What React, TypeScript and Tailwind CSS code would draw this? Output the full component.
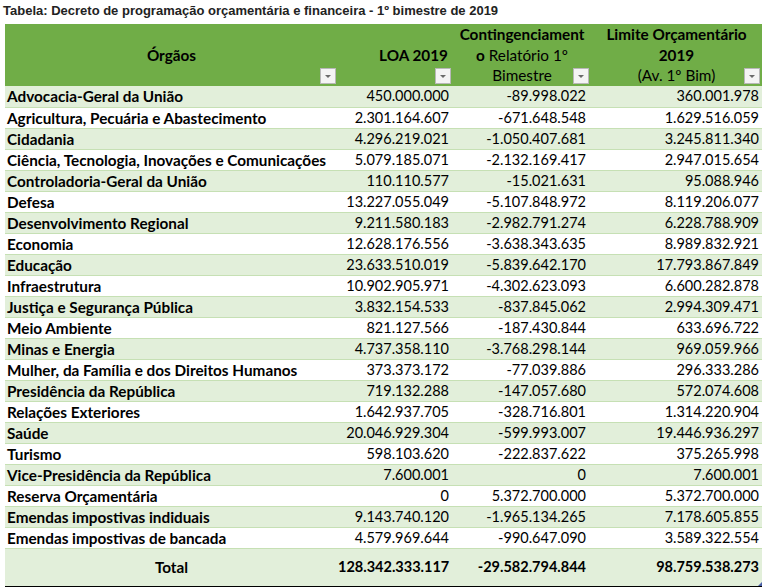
import React from "react";

type Row = { orgao: string; loa: string; cont: string; limite: string };

const rows: Row[] = [
  { orgao: "Advocacia-Geral da União", loa: "450.000.000", cont: "-89.998.022", limite: "360.001.978" },
  { orgao: "Agricultura, Pecuária e Abastecimento", loa: "2.301.164.607", cont: "-671.648.548", limite: "1.629.516.059" },
  { orgao: "Cidadania", loa: "4.296.219.021", cont: "-1.050.407.681", limite: "3.245.811.340" },
  { orgao: "Ciência, Tecnologia, Inovações e Comunicações", loa: "5.079.185.071", cont: "-2.132.169.417", limite: "2.947.015.654" },
  { orgao: "Controladoria-Geral da União", loa: "110.110.577", cont: "-15.021.631", limite: "95.088.946" },
  { orgao: "Defesa", loa: "13.227.055.049", cont: "-5.107.848.972", limite: "8.119.206.077" },
  { orgao: "Desenvolvimento Regional", loa: "9.211.580.183", cont: "-2.982.791.274", limite: "6.228.788.909" },
  { orgao: "Economia", loa: "12.628.176.556", cont: "-3.638.343.635", limite: "8.989.832.921" },
  { orgao: "Educação", loa: "23.633.510.019", cont: "-5.839.642.170", limite: "17.793.867.849" },
  { orgao: "Infraestrutura", loa: "10.902.905.971", cont: "-4.302.623.093", limite: "6.600.282.878" },
  { orgao: "Justiça e Segurança Pública", loa: "3.832.154.533", cont: "-837.845.062", limite: "2.994.309.471" },
  { orgao: "Meio Ambiente", loa: "821.127.566", cont: "-187.430.844", limite: "633.696.722" },
  { orgao: "Minas e Energia", loa: "4.737.358.110", cont: "-3.768.298.144", limite: "969.059.966" },
  { orgao: "Mulher, da Família e dos Direitos Humanos", loa: "373.373.172", cont: "-77.039.886", limite: "296.333.286" },
  { orgao: "Presidência da República", loa: "719.132.288", cont: "-147.057.680", limite: "572.074.608" },
  { orgao: "Relações Exteriores", loa: "1.642.937.705", cont: "-328.716.801", limite: "1.314.220.904" },
  { orgao: "Saúde", loa: "20.046.929.304", cont: "-599.993.007", limite: "19.446.936.297" },
  { orgao: "Turismo", loa: "598.103.620", cont: "-222.837.622", limite: "375.265.998" },
  { orgao: "Vice-Presidência da República", loa: "7.600.001", cont: "0", limite: "7.600.001" },
  { orgao: "Reserva Orçamentária", loa: "0", cont: "5.372.700.000", limite: "5.372.700.000" },
  { orgao: "Emendas impostivas indiduais", loa: "9.143.740.120", cont: "-1.965.134.265", limite: "7.178.605.855" },
  { orgao: "Emendas impostivas de bancada", loa: "4.579.969.644", cont: "-990.647.090", limite: "3.589.322.554" },
];

// little excel filter button
const FilterButton = () => (
  <span className="absolute right-[2px] bottom-[2px] flex h-[16px] w-[16px] items-center justify-center border border-[#b8b8b8] bg-[#f4f4f4]">
    <svg width="8" height="5" viewBox="0 0 8 5">
      <path d="M1 1 L7 1 L4 4 Z" fill="#6a6a6a" />
    </svg>
  </span>
);

export default function App() {
  return (
    <div className="h-[588px] w-[762px] overflow-hidden bg-white">
      <p className="h-[24px] pl-[3px] pt-[3px] font-['Liberation_Sans',Arial,sans-serif] text-[13px] font-bold leading-[16px] text-[#222]">
        Tabela: Decreto de programação orçamentária e financeira - 1º bimestre de 2019
      </p>
      <table className="ml-[5px] w-[757px] table-fixed border-collapse font-['Lato','Open_Sans',sans-serif] text-[14.5px] text-black">
        <colgroup>
          <col className="w-[333px]" />
          <col className="w-[115px]" />
          <col className="w-[138px]" />
          <col className="w-[171px]" />
        </colgroup>
        <thead>
          <tr className="h-[62px] bg-[#70ad47] text-[15.3px] leading-[20.5px]">
            <th className="relative text-center align-middle font-bold">
              Órgãos
              <FilterButton />
            </th>
            <th className="relative pr-[5px] text-right align-middle font-bold">
              LOA 2019
              <FilterButton />
            </th>
            <th className="relative align-top">
              <div className="font-bold">Contingenciament</div>
              <div className="font-normal">
                <span className="font-bold">o</span> Relatório 1º
              </div>
              <div className="font-normal">Bimestre</div>
              <FilterButton />
            </th>
            <th className="relative align-top">
              <div className="font-bold">Limite Orçamentário</div>
              <div className="font-bold">2019</div>
              <div className="font-normal">(Av. 1º Bim)</div>
              <FilterButton />
            </th>
          </tr>
        </thead>
        <tbody>
          {rows.map((r, i) => (
            <tr
              key={r.orgao}
              className={`h-[21px] border-b border-[#c6e0b4] leading-[20px] ${i % 2 === 0 ? "bg-[#e2efda]" : "bg-white"}`}
            >
              <td className="pl-[2px] text-[15.3px] font-bold whitespace-nowrap">{r.orgao}</td>
              <td className="pr-[4px] text-right">{r.loa}</td>
              <td className="pr-[5px] text-right">{r.cont}</td>
              <td className="pr-[3px] text-right">{r.limite}</td>
            </tr>
          ))}
          <tr className="h-[38px] border-t-[1.5px] border-b-[1.5px] border-black bg-[#e2efda] font-bold">
            <td className="text-center text-[15.3px]">Total</td>
            <td className="pr-[4px] text-right">128.342.333.117</td>
            <td className="pr-[5px] text-right">-29.582.794.844</td>
            <td className="relative pr-[3px] text-right">
              98.759.538.273
              <svg className="absolute right-0 bottom-0" width="4" height="4" viewBox="0 0 4 4">
                <path d="M4 0 L4 4 L0 4 Z" fill="#4a5fa8" />
              </svg>
            </td>
          </tr>
        </tbody>
      </table>
    </div>
  );
}
